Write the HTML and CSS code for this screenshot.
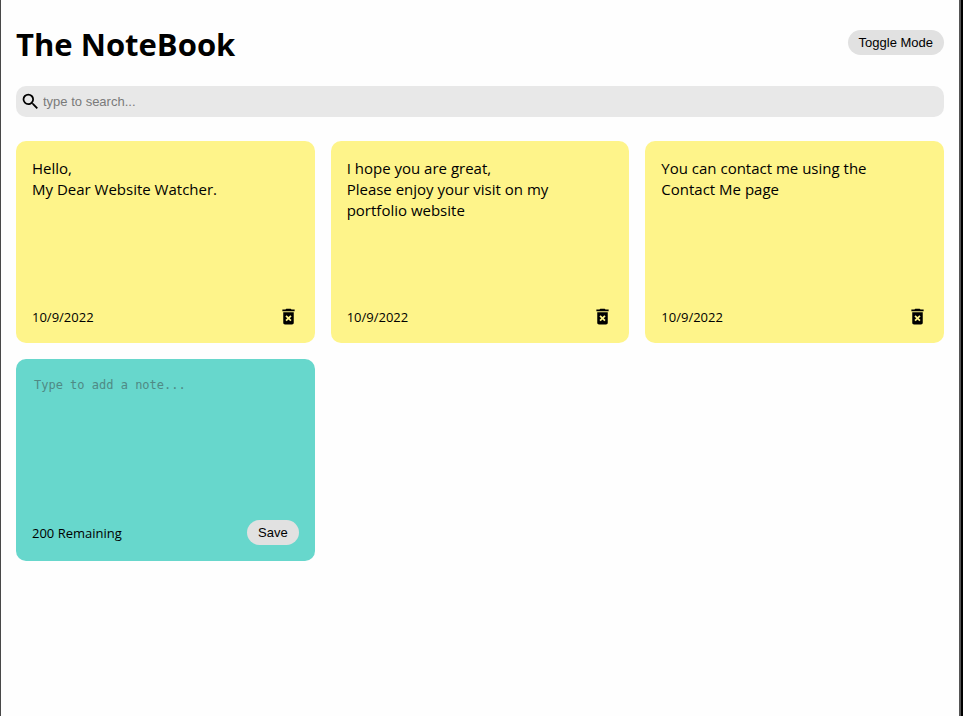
FILE: index.html
```html
<!DOCTYPE html>
<html lang="en">
<head>
    <meta charset="UTF-8">
    <meta name="viewport" content="width=device-width, initial-scale=1.0">
    <title>The NoteBook</title>
    <link rel="stylesheet" href="styles.css">
</head>
<body>

    <svg class="icon-defs" aria-hidden="true">
        <symbol id="icon-delete" viewBox="0 0 24 24">
            <path d="M6 19c0 1.1.9 2 2 2h8c1.1 0 2-.9 2-2V7H6v12zm2.46-7.12l1.41-1.41L12 12.59l2.12-2.12 1.41 1.41L13.41 14l2.12 2.12-1.41 1.41L12 15.41l-2.12 2.12-1.41-1.41L10.59 14l-2.13-2.12zM15.5 4l-1-1h-5l-1 1H5v2h14V4z"/>
        </symbol>
    </svg>

    <div class="container">
        <header class="header">
            <h1>The NoteBook</h1>
            <button type="button" class="btn">Toggle Mode</button>
        </header>

        <label class="search">
            <svg class="icon" viewBox="0 0 24 24" aria-hidden="true">
                <path d="M15.5 14h-.79l-.28-.27A6.471 6.471 0 0 0 16 9.5 6.5 6.5 0 1 0 9.5 16c1.61 0 3.09-.59 4.23-1.57l.27.28v.79l5 4.99L20.49 19l-4.99-5zm-6 0C7.01 14 5 11.99 5 9.5S7.01 5 9.5 5 14 7.01 14 9.5 11.99 14 9.5 14z"/>
            </svg>
            <input type="text" placeholder="type to search..." aria-label="Search notes">
        </label>

        <main class="notes-list">
            <article class="note">
                <p>Hello,<br>My Dear Website Watcher.</p>
                <div class="note-footer">
                    <small>10/9/2022</small>
                    <button type="button" class="delete-btn" aria-label="Delete note">
                        <svg class="icon"><use href="#icon-delete"/></svg>
                    </button>
                </div>
            </article>

            <article class="note">
                <p>I hope you are great,<br>Please enjoy your visit on my portfolio website</p>
                <div class="note-footer">
                    <small>10/9/2022</small>
                    <button type="button" class="delete-btn" aria-label="Delete note">
                        <svg class="icon"><use href="#icon-delete"/></svg>
                    </button>
                </div>
            </article>

            <article class="note">
                <p>You can contact me using the Contact Me page</p>
                <div class="note-footer">
                    <small>10/9/2022</small>
                    <button type="button" class="delete-btn" aria-label="Delete note">
                        <svg class="icon"><use href="#icon-delete"/></svg>
                    </button>
                </div>
            </article>

            <form class="note new">
                <textarea placeholder="Type to add a note..." aria-label="New note" maxlength="200"></textarea>
                <div class="note-footer">
                    <small>200 Remaining</small>
                    <button type="button" class="btn">Save</button>
                </div>
            </form>
        </main>
    </div>

</body>
</html>
```

FILE: styles.css
```css
* {
    box-sizing: border-box;
}

body {
    margin: 0;
    background: #fefefe;
    color: #000;
    font-family: 'Segoe UI', 'Open Sans', sans-serif;
    font-size: 15px;
    line-height: 21px;
}

.icon-defs {
    display: none;
}

.container {
    min-height: 100vh;
    padding: 0 15px;
    border-left: 1px solid #484848;
    border-right: 2px solid #555;
    margin-right: 2px;
    box-shadow: 2px 0 0 #000;
}

.header {
    display: flex;
    justify-content: space-between;
    align-items: center;
    padding: 20px 0;
}

h1 {
    margin: 0;
    padding-top: 4px;
    font-size: 31px;
    line-height: 41px;
}

.btn {
    height: 25px;
    padding: 0 11px;
    border: none;
    border-radius: 15px;
    background: #e1e1e1;
    color: #000;
    font-family: Arial, 'Liberation Sans', sans-serif;
    font-size: 13px;
    cursor: pointer;
}

.btn:hover {
    background: #ccc;
}

.icon {
    display: block;
    flex: none;
    width: 21px;
    height: 21px;
    fill: #000;
}

.search {
    display: flex;
    align-items: center;
    gap: 2px;
    margin: 1px 0 24px;
    padding: 5px 4px;
    border-radius: 10px;
    background: #e8e8e8;
}

.search input {
    flex: 1;
    min-width: 0;
    height: 21px;
    padding: 0;
    border: none;
    outline: none;
    background: transparent;
    font-family: Arial, 'Liberation Sans', sans-serif;
    font-size: 13px;
}

.search input::placeholder {
    color: #7a7a7a;
}

.notes-list {
    display: grid;
    grid-template-columns: repeat(auto-fill, minmax(250px, 1fr));
    gap: 16px;
}

.note {
    display: flex;
    flex-direction: column;
    justify-content: space-between;
    min-height: 202px;
    padding: 16px;
    border-radius: 10px;
    background: #fef48a;
}

.note p {
    margin: 0;
    padding: 1px 8px 0 0;
    white-space: pre-wrap;
}

.note-footer {
    display: flex;
    justify-content: space-between;
    align-items: center;
}

.note-footer small {
    padding-top: 2px;
    font-size: 13px;
    line-height: 19px;
}

.delete-btn {
    padding: 0;
    border: none;
    background: none;
    cursor: pointer;
}

.note.new {
    background: #67d7cc;
}

.note.new textarea {
    flex: 1;
    padding: 2px;
    border: none;
    outline: none;
    resize: none;
    background: transparent;
    font-family: Consolas, 'DejaVu Sans Mono', monospace;
    font-size: 12px;
    line-height: 16px;
}

.note.new textarea::placeholder {
    color: #4f8a85;
}
```
